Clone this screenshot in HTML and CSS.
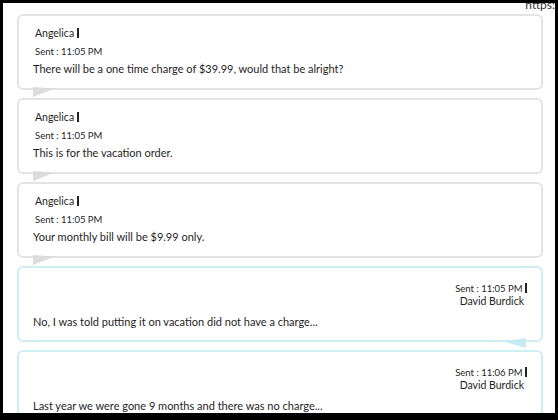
FILE: index.html
```html
<!DOCTYPE html>
<html lang="en">
<head>
    <meta charset="UTF-8">
    <title>Chat</title>
    <link rel="stylesheet" href="styles.css">
</head>
<body>
    <div class="screen">
        <span class="url">https:</span>
        <div class="chat">
            <div class="msg agent">
                <div class="name">Angelica <span class="bar"></span></div>
                <div class="time">Sent : 11:05 PM</div>
                <div class="text">There will be a one time charge of $39.99, would that be alright?</div>
            </div>
            <div class="msg agent">
                <div class="name">Angelica <span class="bar"></span></div>
                <div class="time">Sent : 11:05 PM</div>
                <div class="text">This is for the vacation order.</div>
            </div>
            <div class="msg agent">
                <div class="name">Angelica <span class="bar"></span></div>
                <div class="time">Sent : 11:05 PM</div>
                <div class="text">Your monthly bill will be $9.99 only.</div>
            </div>
            <div class="msg customer">
                <div class="time">Sent : 11:05 PM <span class="bar"></span></div>
                <div class="name">David Burdick</div>
                <div class="text">No, I was told putting it on vacation did not have a charge...</div>
            </div>
            <div class="msg customer">
                <div class="time">Sent : 11:06 PM <span class="bar"></span></div>
                <div class="name">David Burdick</div>
                <div class="text">Last year we were gone 9 months and there was no charge...</div>
            </div>
        </div>
    </div>
</body>
</html>
```

FILE: styles.css
```css
body{
    margin: 0;
    background: #000;
    font-family: "Lato", "Open Sans", sans-serif;
    color: #1e1e1e;
}
.screen{
    position: relative;
    margin: 3px 0 0 3px;
    width: 552px;
    height: 410px;
    background: #fff;
    overflow: hidden;
}
.url{
    position: absolute;
    top: -6px;
    right: 0;
    font-size: 12px;
    color: #333;
}
.chat{
    display: flex;
    flex-direction: column;
    gap: 8px;
    padding: 11px 0 0 14px;
    width: 526px;
}
.msg{
    position: relative;
    flex-shrink: 0;
    height: 72px;
    border: 2px solid #e4e4e4;
    border-radius: 6px;
    padding: 0 14px;
}
.msg::after{
    content: "";
    position: absolute;
    bottom: -9px;
    width: 22px;
    height: 10px;
}
.agent::after{
    left: 14px;
    background: #dcdcdc;
    clip-path: polygon(0 0, 100% 15%, 0 100%);
}
.customer{
    border-color: #cdeef3;
}
.customer::after{
    right: 15px;
    background: #c4ebf1;
    clip-path: polygon(100% 0, 0 35%, 100% 100%);
    bottom: -8px;
}
.bar{
    display: inline-block;
    width: 2px;
    height: 10px;
    background: #222;
    vertical-align: -1px;
}
.agent .name{
    font-size: 10.5px;
    margin-top: 10px;
    line-height: 14px;
    padding-left: 2px;
}
.agent .time{
    font-size: 9.5px;
    margin-top: 5px;
    line-height: 14px;
    padding-left: 2px;
}
.text{
    font-size: 11px;
    line-height: 14px;
    margin-top: 3px;
}
.customer .time{
    font-size: 9.5px;
    text-align: right;
    margin-top: 14px;
    line-height: 13px;
}
.customer .name{
    font-size: 10.5px;
    text-align: right;
    line-height: 13px;
    padding-right: 3px;
}
.customer .text{
    margin-top: 7px;
}
```
